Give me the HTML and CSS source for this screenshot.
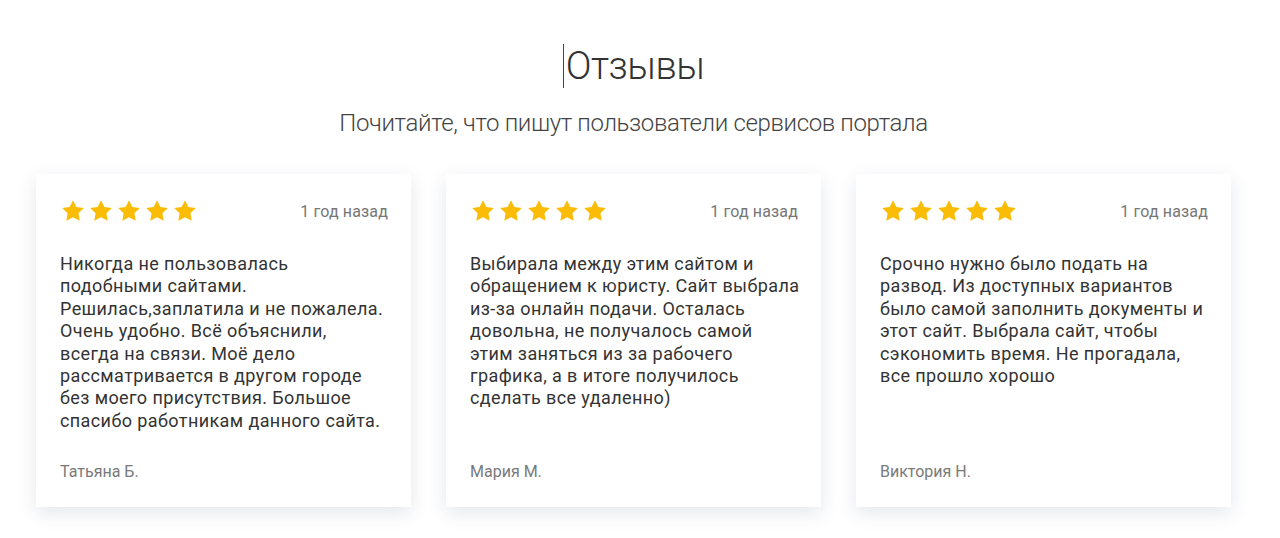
FILE: index.html
```html
<!DOCTYPE html>
<html lang="ru">
<head>
    <meta charset="UTF-8">
    <meta name="viewport" content="width=device-width, initial-scale=1.0">
    <title>Отзывы</title>
    <link rel="stylesheet" href="styles.css">
</head>
<body>
    <section class="reviews">
        <h1 class="reviews-title"><span class="caret"></span>Отзывы</h1>
        <p class="reviews-subtitle">Почитайте, что пишут пользователи сервисов портала</p>

        <div class="review-list">
            <div class="review">
                <div class="review-head">
                    <div class="stars">
                        <svg viewBox="0 0 24 24"><path d="M12 2l3.09 6.26L22 9.27l-5 4.87 1.18 6.88L12 17.77l-6.18 3.25L7 14.14 2 9.27l6.91-1.01L12 2z"/></svg>
                        <svg viewBox="0 0 24 24"><path d="M12 2l3.09 6.26L22 9.27l-5 4.87 1.18 6.88L12 17.77l-6.18 3.25L7 14.14 2 9.27l6.91-1.01L12 2z"/></svg>
                        <svg viewBox="0 0 24 24"><path d="M12 2l3.09 6.26L22 9.27l-5 4.87 1.18 6.88L12 17.77l-6.18 3.25L7 14.14 2 9.27l6.91-1.01L12 2z"/></svg>
                        <svg viewBox="0 0 24 24"><path d="M12 2l3.09 6.26L22 9.27l-5 4.87 1.18 6.88L12 17.77l-6.18 3.25L7 14.14 2 9.27l6.91-1.01L12 2z"/></svg>
                        <svg viewBox="0 0 24 24"><path d="M12 2l3.09 6.26L22 9.27l-5 4.87 1.18 6.88L12 17.77l-6.18 3.25L7 14.14 2 9.27l6.91-1.01L12 2z"/></svg>
                    </div>
                    <span class="review-date">1 год назад</span>
                </div>
                <p class="review-text">Никогда не пользовалась<br>подобными сайтами.<br>Решилась,заплатила и не пожалела.<br>Очень удобно. Всё объяснили,<br>всегда на связи. Моё дело<br>рассматривается в другом городе<br>без моего присутствия. Большое<br>спасибо работникам данного сайта.</p>
                <div class="review-author">Татьяна Б.</div>
            </div>

            <div class="review">
                <div class="review-head">
                    <div class="stars">
                        <svg viewBox="0 0 24 24"><path d="M12 2l3.09 6.26L22 9.27l-5 4.87 1.18 6.88L12 17.77l-6.18 3.25L7 14.14 2 9.27l6.91-1.01L12 2z"/></svg>
                        <svg viewBox="0 0 24 24"><path d="M12 2l3.09 6.26L22 9.27l-5 4.87 1.18 6.88L12 17.77l-6.18 3.25L7 14.14 2 9.27l6.91-1.01L12 2z"/></svg>
                        <svg viewBox="0 0 24 24"><path d="M12 2l3.09 6.26L22 9.27l-5 4.87 1.18 6.88L12 17.77l-6.18 3.25L7 14.14 2 9.27l6.91-1.01L12 2z"/></svg>
                        <svg viewBox="0 0 24 24"><path d="M12 2l3.09 6.26L22 9.27l-5 4.87 1.18 6.88L12 17.77l-6.18 3.25L7 14.14 2 9.27l6.91-1.01L12 2z"/></svg>
                        <svg viewBox="0 0 24 24"><path d="M12 2l3.09 6.26L22 9.27l-5 4.87 1.18 6.88L12 17.77l-6.18 3.25L7 14.14 2 9.27l6.91-1.01L12 2z"/></svg>
                    </div>
                    <span class="review-date">1 год назад</span>
                </div>
                <p class="review-text">Выбирала между этим сайтом и<br>обращением к юристу. Сайт выбрала<br>из-за онлайн подачи. Осталась<br>довольна, не получалось самой<br>этим заняться из за рабочего<br>графика, а в итоге получилось<br>сделать все удаленно)</p>
                <div class="review-author">Мария М.</div>
            </div>

            <div class="review">
                <div class="review-head">
                    <div class="stars">
                        <svg viewBox="0 0 24 24"><path d="M12 2l3.09 6.26L22 9.27l-5 4.87 1.18 6.88L12 17.77l-6.18 3.25L7 14.14 2 9.27l6.91-1.01L12 2z"/></svg>
                        <svg viewBox="0 0 24 24"><path d="M12 2l3.09 6.26L22 9.27l-5 4.87 1.18 6.88L12 17.77l-6.18 3.25L7 14.14 2 9.27l6.91-1.01L12 2z"/></svg>
                        <svg viewBox="0 0 24 24"><path d="M12 2l3.09 6.26L22 9.27l-5 4.87 1.18 6.88L12 17.77l-6.18 3.25L7 14.14 2 9.27l6.91-1.01L12 2z"/></svg>
                        <svg viewBox="0 0 24 24"><path d="M12 2l3.09 6.26L22 9.27l-5 4.87 1.18 6.88L12 17.77l-6.18 3.25L7 14.14 2 9.27l6.91-1.01L12 2z"/></svg>
                        <svg viewBox="0 0 24 24"><path d="M12 2l3.09 6.26L22 9.27l-5 4.87 1.18 6.88L12 17.77l-6.18 3.25L7 14.14 2 9.27l6.91-1.01L12 2z"/></svg>
                    </div>
                    <span class="review-date">1 год назад</span>
                </div>
                <p class="review-text">Срочно нужно было подать на<br>развод. Из доступных вариантов<br>было самой заполнить документы и<br>этот сайт. Выбрала сайт, чтобы<br>сэкономить время. Не прогадала,<br>все прошло хорошо</p>
                <div class="review-author">Виктория Н.</div>
            </div>
        </div>
    </section>
</body>
</html>
```

FILE: styles.css
```css
body {
    font-family: Roboto, "Liberation Sans", Arial, sans-serif;
    background-color: #fff;
    color: #333;
    margin: 0;
    padding: 0;
}
.reviews {
    padding: 42px 13px 40px 0;
    text-align: center;
}
.reviews-title {
    font-size: 38px;
    font-weight: 300;
    letter-spacing: -0.5px;
    line-height: 48px;
    margin: 0;
    color: #333;
}
.caret {
    display: inline-block;
    width: 1px;
    height: 44px;
    margin-right: 2px;
    background-color: #444;
    vertical-align: -9px;
}
.reviews-subtitle {
    font-size: 24px;
    font-weight: 300;
    letter-spacing: -0.35px;
    line-height: 30px;
    margin: 18px 0 36px;
    color: #444;
}
.review-list {
    display: grid;
    grid-template-columns: repeat(3, 375px);
    gap: 35px;
    justify-content: center;
    text-align: left;
}
.review {
    background-color: white;
    padding: 24px 22px 25px 24px;
    display: flex;
    flex-direction: column;
    box-shadow: 0 6px 18px rgba(40, 60, 110, 0.12);
}
.review-head {
    display: flex;
    justify-content: space-between;
    align-items: center;
    height: 26px;
}
.stars {
    display: flex;
    gap: 2px;
}
.stars svg {
    width: 26px;
    height: 26px;
    fill: #fbbc05;
}
.review-date {
    font-size: 16px;
    letter-spacing: 0.15px;
    color: #777;
    margin-right: 1px;
}
.review-text {
    flex: 1;
    font-size: 18px;
    letter-spacing: 0.4px;
    line-height: 22.4px;
    white-space: nowrap;
    margin: 29px 0 0;
    color: #333;
}
.review-author {
    font-size: 16px;
    line-height: 20px;
    margin-top: 30px;
    color: #7a7a7a;
}
```
